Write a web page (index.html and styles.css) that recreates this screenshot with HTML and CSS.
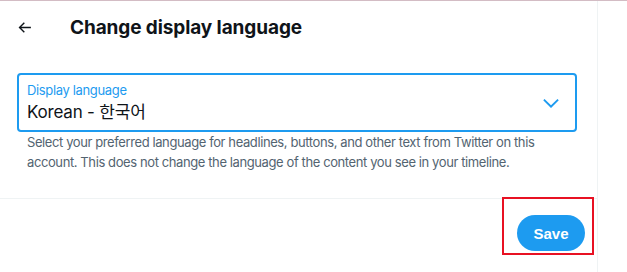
FILE: index.html
```html
<!DOCTYPE html>
<html lang="en">
<head>
    <meta charset="UTF-8">
    <title>Change display language</title>
    <link rel="stylesheet" href="styles.css">
</head>
<body>
    <div class="page">
        <main class="column">
            <header class="header">
                <button class="back-btn" aria-label="Back">
                    <svg viewBox="0 0 24 24"><path d="M7.414 13l5.043 5.04-1.414 1.42L3.586 12l7.457-7.46 1.414 1.42L7.414 11H21v2H7.414z"/></svg>
                </button>
                <h2>Change display language</h2>
            </header>

            <section class="form">
                <label class="select">
                    <span class="select-label">Display language</span>
                    <span class="select-value">Korean - 한국어</span>
                    <svg class="chevron" viewBox="0 0 24 24"><path d="M3.543 8.96l1.414-1.42L12 14.59l7.043-7.05 1.414 1.42L12 17.41 3.543 8.96z"/></svg>
                </label>
                <p class="help">Select your preferred language for headlines, buttons, and other text from Twitter on this account. This does not change the language of the content you see in your timeline.</p>
            </section>

            <div class="actions">
                <button class="save-btn">Save</button>
                <div class="highlight"></div>
            </div>
        </main>
    </div>
</body>
</html>
```

FILE: styles.css
```css
* {
    margin: 0;
    padding: 0;
    box-sizing: border-box;
}

body {
    font-family: Inter, "Noto Sans CJK KR", sans-serif;
    background: #ffffff;
    color: #0f1419;
    width: 627px;
    height: 272px;
    overflow: hidden;
}

.page {
    border-top: 1px solid #d3bcc4;
    height: 100%;
}

.column {
    width: 598px;
    height: 100%;
    border-right: 1px solid #eff3f4;
}

.header {
    display: flex;
    align-items: center;
    height: 53px;
    padding: 0 16px;
}

.back-btn {
    width: 54px;
    height: 34px;
    border: none;
    background: none;
    display: flex;
    align-items: center;
}

.back-btn svg {
    width: 17px;
    height: 17px;
    fill: #0f1419;
}

.header h2 {
    font-size: 19px;
    font-weight: 700;
    letter-spacing: -0.1px;
}

.form {
    padding: 19px 20px 0 17px;
}

.select {
    display: block;
    position: relative;
    height: 59px;
    border: 2px solid #1d9bf0;
    border-radius: 4px;
    padding: 7px 8px 0;
}

.select-label {
    display: block;
    font-size: 13px;
    line-height: 16px;
    letter-spacing: -0.35px;
    color: #1d9bf0;
}

.select-value {
    display: block;
    margin-top: 3px;
    font-size: 17px;
    line-height: 22px;
    letter-spacing: -0.2px;
}

.chevron {
    position: absolute;
    right: 13px;
    top: 17px;
    width: 22px;
    height: 22px;
    fill: #1d9bf0;
}

.help {
    padding: 0 10px;
    font-size: 13px;
    line-height: 20px;
    letter-spacing: -0.4px;
    color: #536471;
}

.actions {
    position: relative;
    display: flex;
    justify-content: flex-end;
    margin-top: 26px;
    border-top: 1px solid #eff3f4;
    padding: 16px 12px;
}

.save-btn {
    width: 68px;
    height: 36px;
    border: none;
    border-radius: 18px;
    background: #1d9bf0;
    color: #ffffff;
    font-family: "Liberation Sans", Arial, sans-serif;
    font-size: 15px;
    font-weight: 700;
}

.highlight {
    position: absolute;
    left: 502px;
    top: -2px;
    width: 92px;
    height: 58px;
    border: 2px solid #e81123;
}
```
